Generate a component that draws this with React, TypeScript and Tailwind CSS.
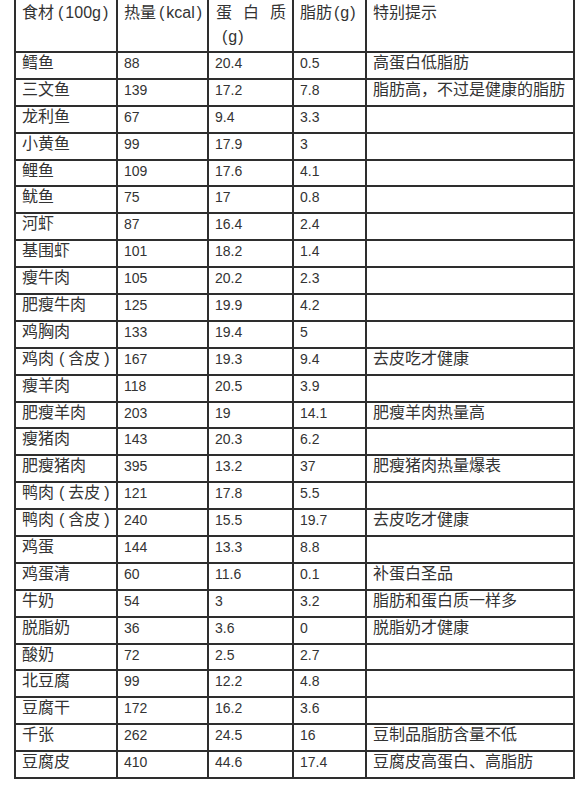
import React from 'react';

const rows: [string, string, string, string, string][] = [
  ['鳕鱼', '88', '20.4', '0.5', '高蛋白低脂肪'],
  ['三文鱼', '139', '17.2', '7.8', '脂肪高，不过是健康的脂肪'],
  ['龙利鱼', '67', '9.4', '3.3', ''],
  ['小黄鱼', '99', '17.9', '3', ''],
  ['鲤鱼', '109', '17.6', '4.1', ''],
  ['鱿鱼', '75', '17', '0.8', ''],
  ['河虾', '87', '16.4', '2.4', ''],
  ['基围虾', '101', '18.2', '1.4', ''],
  ['瘦牛肉', '105', '20.2', '2.3', ''],
  ['肥瘦牛肉', '125', '19.9', '4.2', ''],
  ['鸡胸肉', '133', '19.4', '5', ''],
  ['鸡肉（含皮）', '167', '19.3', '9.4', '去皮吃才健康'],
  ['瘦羊肉', '118', '20.5', '3.9', ''],
  ['肥瘦羊肉', '203', '19', '14.1', '肥瘦羊肉热量高'],
  ['瘦猪肉', '143', '20.3', '6.2', ''],
  ['肥瘦猪肉', '395', '13.2', '37', '肥瘦猪肉热量爆表'],
  ['鸭肉（去皮）', '121', '17.8', '5.5', ''],
  ['鸭肉（含皮）', '240', '15.5', '19.7', '去皮吃才健康'],
  ['鸡蛋', '144', '13.3', '8.8', ''],
  ['鸡蛋清', '60', '11.6', '0.1', '补蛋白圣品'],
  ['牛奶', '54', '3', '3.2', '脂肪和蛋白质一样多'],
  ['脱脂奶', '36', '3.6', '0', '脱脂奶才健康'],
  ['酸奶', '72', '2.5', '2.7', ''],
  ['北豆腐', '99', '12.2', '4.8', ''],
  ['豆腐干', '172', '16.2', '3.6', ''],
  ['千张', '262', '24.5', '16', '豆制品脂肪含量不低'],
  ['豆腐皮', '410', '44.6', '17.4', '豆腐皮高蛋白、高脂肪'],
];

const widths = ['w-[102px]', 'w-[91px]', 'w-[85px]', 'w-[73px]', 'w-[208px]'];

// fullwidth brackets in the picture are squeezed, so draw narrow ones with a little room
function withParens(text: string) {
  return text.split(/([（）])/).map((part, i) => {
    if (part === '（') return <span key={i} className="ml-[5px] mr-[4px]">(</span>;
    if (part === '）') return <span key={i} className="ml-[4px] mr-[3px]">)</span>;
    return <span key={i}>{part}</span>;
  });
}

function Cell({ i, children, num }: { i: number; children?: React.ReactNode; num?: boolean }) {
  return (
    <div
      className={`${widths[i]} shrink-0 border-r-2 border-[#2e2e2e] pl-[6px] pt-[2px] leading-[16px] whitespace-nowrap ${
        num ? 'text-[14px]' : 'text-[16px]'
      }`}
    >
      {children}
    </div>
  );
}

export default function App() {
  return (
    <div className="min-h-[801px] w-[576px] bg-white text-[#333] font-['Liberation_Sans','Noto_Sans_CJK_SC',sans-serif]">
      <div className="ml-[14px] w-[561px] border-l-2 border-[#2e2e2e]">
        {/* header */}
        <div className="flex h-[53px] border-b-2 border-[#2e2e2e] text-[16px] leading-[24px]">
          <div className={`${widths[0]} shrink-0 border-r-2 border-[#2e2e2e] pl-[6px] pt-[1px] whitespace-nowrap`}>
            食材<span className="ml-[4px] mr-[2px]">(</span>100g<span className="ml-[2px]">)</span>
          </div>
          <div className={`${widths[1]} shrink-0 border-r-2 border-[#2e2e2e] pl-[6px] pt-[1px] whitespace-nowrap`}>
            热量<span className="ml-[3px] mr-[2px]">(</span>kcal<span className="ml-[2px]">)</span>
          </div>
          <div className={`${widths[2]} shrink-0 border-r-2 border-[#2e2e2e] pl-[7px] pr-[6px] pt-[1px]`}>
            <div className="flex justify-between">
              <span>蛋</span>
              <span>白</span>
              <span>质</span>
            </div>
            <div className="pl-[6px]">
              (<span className="mx-[1px]">g</span>)
            </div>
          </div>
          <div className={`${widths[3]} shrink-0 border-r-2 border-[#2e2e2e] pl-[6px] pt-[1px] whitespace-nowrap`}>
            脂肪<span className="ml-[2px] mr-[1px]">(</span>g<span className="mx-[1px]">)</span>
          </div>
          <div className={`${widths[4]} shrink-0 border-r-2 border-[#2e2e2e] pl-[6px] pt-[1px]`}>特别提示</div>
        </div>

        {rows.map((r) => (
          <div key={r[0]} className="flex h-[26.9px] border-b-2 border-[#2e2e2e]">
            <Cell i={0}>{withParens(r[0])}</Cell>
            <Cell i={1} num>{r[1]}</Cell>
            <Cell i={2} num>{r[2]}</Cell>
            <Cell i={3} num>{r[3]}</Cell>
            <Cell i={4}>{r[4]}</Cell>
          </div>
        ))}
      </div>
    </div>
  );
}
